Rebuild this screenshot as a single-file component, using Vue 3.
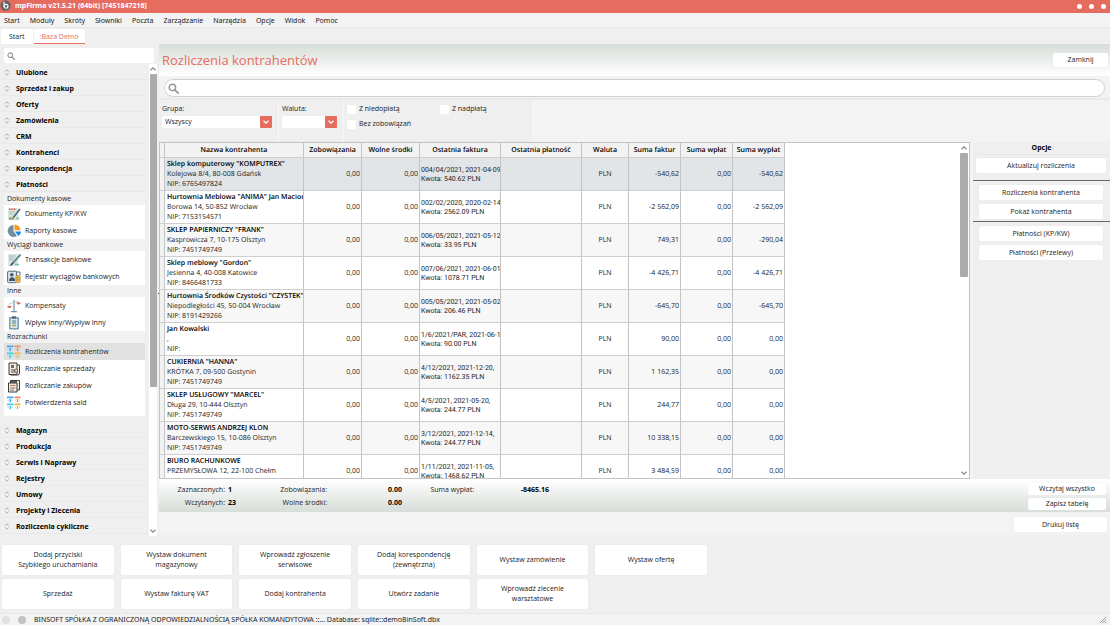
<template>
  <div class="app">
    <svg width="0" height="0" class="sprites" aria-hidden="true">
      <symbol id="search" viewBox="0 0 12 12">
        <circle cx="4.8" cy="4.8" r="3.5" fill="none" stroke="#999" stroke-width="1.6" />
        <path d="M7.4 7.4 L11 11" stroke="#999" stroke-width="2" stroke-linecap="round" />
      </symbol>
      <symbol id="chevron" viewBox="0 0 8 8">
        <path d="M1.5 2.8 L4 5.2 L6.5 2.8" fill="none" stroke="currentColor" stroke-width="1.2" />
      </symbol>
      <symbol id="updown" viewBox="0 0 6 8">
        <path d="M1 3 L3 1 L5 3 M1 5 L3 7 L5 5" fill="none" stroke="#999" stroke-width="0.9" />
      </symbol>
      <symbol id="cash" viewBox="0 0 14 14">
        <path d="M1 1 h10 v12 h-10z" fill="#d9e4df" />
        <path d="M2 2.3 h7" stroke="#e2574c" stroke-width="1.5" stroke-dasharray="1.5 .7" />
        <path d="M2.5 5 h5 M2.5 7 h3" stroke="#9aaeb2" stroke-width=".8" />
        <path d="M2 11.5 h5" stroke="#4fae8c" stroke-width="2" />
        <path d="M13 2 L5.5 11.5" stroke="#4a6b80" stroke-width="1.8" />
        <path d="M6.5 10 L4 13" stroke="#e9a93b" stroke-width="1.3" />
        <path d="M9 10 h3 v3 h-3z" fill="#a9cdd0" />
      </symbol>
      <symbol id="pie" viewBox="0 0 14 14">
        <path d="M6.5 7 V1 A6 6 0 1 0 10 12z" fill="#6f8da3" />
        <path d="M7.5 6.3 V.5 A6 6 0 0 1 13.5 6.3z" fill="#f79a1c" />
        <path d="M8 7.5 H14 A6 6 0 0 1 11.5 12z" fill="#1285ee" />
      </symbol>
      <symbol id="transfer" viewBox="0 0 14 14">
        <path d="M1 1 h10 v12 h-10z" fill="#dce8e7" />
        <path d="M2 3 h7 M2 5 h5 M2 7 h4" stroke="#91a9ad" stroke-width=".8" />
        <path d="M13.5 1.5 L5 11" stroke="#668c9e" stroke-width="2" />
        <path d="M5.8 10 L3.5 12.7" stroke="#273f4e" stroke-width="1.3" />
        <path d="M8 11.5 h4" stroke="#78b9ae" stroke-width="1.5" />
      </symbol>
      <symbol id="register" viewBox="0 0 14 14">
        <rect x=".6" y="1.2" width="9" height="11.5" rx="1" fill="#dce5ee" stroke="#5c6b7c" />
        <circle cx="4.8" cy="4.7" r="1.8" fill="#46566a" />
        <path d="M2 11 q0-3.7 3-3.7 t3 3.7z" fill="#40536b" />
        <path d="M9 2 h4 v3" fill="none" stroke="#5c6b7c" />
        <ellipse cx="11" cy="6.8" rx="2.5" ry="1.4" fill="#f2c54b" stroke="#94722b" stroke-width=".6" />
        <ellipse cx="11" cy="9" rx="2.5" ry="1.4" fill="#f2c54b" stroke="#94722b" stroke-width=".6" />
        <ellipse cx="11" cy="11.3" rx="2.5" ry="1.4" fill="#f2c54b" stroke="#94722b" stroke-width=".6" />
      </symbol>
      <symbol id="scales" viewBox="0 0 14 14">
        <path d="M7 1 V12 M4 12.6 H10" stroke="#7594a9" stroke-width="1.2" />
        <path d="M2.5 4.5 L11.5 2.3" stroke="#a9bfcc" stroke-width=".8" />
        <path d="M2.5 4.5 L1 7 M2.5 4.5 L4 7 M11.5 2.3 L10 4 M11.5 2.3 L13 4" stroke="#c3d3dc" stroke-width=".6" />
        <path d="M.3 7 h4.2 q0 2-2.1 2 t-2.1-2z M9.5 3.5 h4.2 q0 2-2.1 2 t-2.1-2z" fill="#dd6242" />
      </symbol>
      <symbol id="clipboard" viewBox="0 0 14 14">
        <rect x="2" y="1" width="10" height="12.6" rx="1" fill="#7f9dae" />
        <path d="M3.5 2.5 h7 v9.5 h-7z" fill="#d5e9ed" />
        <path d="M5 .3 h4 v2.4 h-4z" fill="#476779" />
        <path d="M5 5 h4 M5 7 h4" stroke="#527b8f" />
        <path d="M5 9.5 h4" stroke="#bf9d4c" stroke-width="1.5" />
      </symbol>
      <symbol id="ledger" viewBox="0 0 14 14">
        <path d="M0 .5 h6.5 v1.7 h-6.5z M2.5 3 h1.5 v3.3 h-1.5z" fill="#46a8f3" />
        <path d="M7.5 .5 h6 v1.7 h-6z M9.8 3 h1.5 v3.3 h-1.5z" fill="#ef8d60" />
        <path d="M0 7.5 h6.5 v1.7 h-6.5z M2.5 10 h1.5 v3.3 h-1.5z" fill="#3bd0ec" />
        <path d="M7.5 7.5 h6 v1.7 h-6z M9.8 10 h1.5 v3.3 h-1.5z" fill="#f2b745" />
        <path d="M.5 4.2 h1.3 M4.7 4.2 h1.3 M8 4.2 h1.2 M12 4.2 h1.2 M.5 11.3 h1.3 M4.7 11.3 h1.3 M8 11.3 h1.2 M12 11.3 h1.2" stroke="#b9c9d3" />
      </symbol>
      <symbol id="sales" viewBox="0 0 14 14">
        <path d="M2 1 h8 v11.5 h-8z" fill="#f2e8df" stroke="#3d3937" />
        <path d="M4 3 h3 v3 h-3z" fill="#6d6864" />
        <path d="M4 8 h4 M4 10 h4" stroke="#55504d" />
        <path d="M10 3 h2.5 v8 q0 2-2 2 h-7" fill="none" stroke="#3d3937" />
        <circle cx="9.2" cy="8.8" r="1.7" fill="#e8c3ad" stroke="#3d3937" stroke-width=".6" />
      </symbol>
      <symbol id="purchase" viewBox="0 0 14 14">
        <path d="M3.5 1.5 h9 v9.5 h-9z" fill="#f5ede5" stroke="#3d3937" />
        <path d="M1.5 4 h8.5 v9 h-8.5z" fill="#f5ede5" stroke="#3d3937" />
        <path d="M4 3 h6" stroke="#333" stroke-width="1.5" />
        <path d="M3 6.5 h5.5" stroke="#d07a54" stroke-width="1.2" />
        <path d="M3 9 h5.5 M3 11 h4" stroke="#66605c" stroke-width=".8" />
      </symbol>
    </svg>

    <header class="titlebar">
      <svg class="logo" viewBox="0 0 12 12">
        <circle cx="6" cy="6" r="5.6" fill="#666" />
        <circle cx="6.6" cy="6.9" r="2.1" fill="none" stroke="#fff" stroke-width="1.3" />
        <path d="M4.4 2 V7" stroke="#fff" stroke-width="1.3" />
      </svg>
      <strong>mpFirma v21.5.21 (64bit) [7451847216]</strong>
      <div class="window-buttons">
        <button v-for="b in windowButtons" :key="b" :aria-label="b"></button>
      </div>
    </header>

    <nav class="menubar">
      <a v-for="item in menu" :key="item" href="#">{{ item }}</a>
    </nav>

    <nav class="tabs">
      <button v-for="tab in tabs" :key="tab" :class="{ active: tab === activeTab }" @click="activeTab = tab">{{ tab }}</button>
    </nav>

    <div class="body">
      <aside class="sidebar">
        <label class="side-search">
          <svg><use href="#search" /></svg>
          <input v-model="sideQuery" type="text" aria-label="Szukaj w menu">
        </label>
        <div class="side-scroll">
          <div class="side-list">
            <button v-for="name in topSections" :key="name" class="section">
              <svg><use href="#updown" /></svg>{{ name }}
            </button>
            <div class="panel">
              <template v-for="group in groups" :key="group.name">
                <h3>{{ group.name }}</h3>
                <a
                  v-for="item in group.items"
                  :key="item.label"
                  href="#"
                  :class="{ selected: item.label === activeItem }"
                  @click.prevent="activeItem = item.label"
                >
                  <svg><use :href="'#' + item.icon" /></svg>{{ item.label }}
                </a>
              </template>
            </div>
            <button v-for="name in bottomSections" :key="name" class="section">
              <svg><use href="#updown" /></svg>{{ name }}
            </button>
          </div>
          <div class="scrollbar side-bar">
            <svg class="up"><use href="#chevron" /></svg>
            <div class="track"><div class="thumb"></div></div>
            <svg><use href="#chevron" /></svg>
          </div>
        </div>
      </aside>

      <div class="splitter"><i></i></div>

      <main class="content">
        <div class="page-head">
          <h1>Rozliczenia kontrahentów</h1>
          <button class="btn">Zamknij</button>
        </div>

        <div class="search-row">
          <label class="search">
            <svg><use href="#search" /></svg>
            <input v-model="query" type="text" aria-label="Szukaj kontrahenta">
          </label>
        </div>

        <div class="filters">
          <div class="filter group-filter">
            <label for="group">Grupa:</label>
            <div class="select">
              <select id="group"><option>Wszyscy</option></select>
              <span><svg><use href="#chevron" /></svg></span>
            </div>
          </div>
          <div class="filter currency-filter">
            <label for="currency">Waluta:</label>
            <div class="select">
              <select id="currency"><option></option></select>
              <span><svg><use href="#chevron" /></svg></span>
            </div>
          </div>
          <div class="filter checks">
            <label><input type="checkbox">Z niedopłatą</label>
            <label><input type="checkbox">Z nadpłatą</label>
            <label><input type="checkbox">Bez zobowiązań</label>
          </div>
        </div>

        <div class="work">
          <div class="table-box">
            <div class="table-view">
              <table>
                <colgroup>
                  <col class="c-mark"><col class="c-name"><col class="c-money"><col class="c-money">
                  <col class="c-doc"><col class="c-doc"><col class="c-cur">
                  <col class="c-sum"><col class="c-sum"><col class="c-sum">
                </colgroup>
                <thead>
                  <tr>
                    <th></th>
                    <th v-for="col in columns" :key="col">{{ col }}</th>
                  </tr>
                </thead>
                <tbody>
                  <tr v-for="(row, i) in rows" :key="row.name" :class="{ selected: i === selectedRow }" @click="selectedRow = i">
                    <td class="mark"></td>
                    <td class="name"><strong>{{ row.name }}</strong><br>{{ row.address }}<br>NIP: {{ row.nip }}</td>
                    <td class="num">0,00</td>
                    <td class="num">0,00</td>
                    <td class="doc">{{ row.invoice }}<br>Kwota: {{ row.amount }} PLN</td>
                    <td></td>
                    <td class="center">PLN</td>
                    <td class="num">{{ row.invoices }}</td>
                    <td class="num">0,00</td>
                    <td class="num">{{ row.payouts }}</td>
                  </tr>
                </tbody>
              </table>
            </div>
            <div class="scrollbar table-bar">
              <svg class="up"><use href="#chevron" /></svg>
              <div class="track"><div class="thumb"></div></div>
              <svg><use href="#chevron" /></svg>
            </div>
          </div>
          <section class="options">
            <h2>Opcje</h2>
            <div class="option-set wide"><button class="btn">Aktualizuj rozliczenia</button></div>
            <div class="option-set">
              <button class="btn">Rozliczenia kontrahenta</button>
              <button class="btn">Pokaż kontrahenta</button>
            </div>
            <div class="option-set">
              <button class="btn">Płatności (KP/KW)</button>
              <button class="btn">Płatności (Przelewy)</button>
            </div>
          </section>
        </div>

        <div class="summary">
          <div class="stats">
            <span>Zaznaczonych:</span><strong class="left">1</strong>
            <span>Zobowiązania:</span><strong>0.00</strong>
            <span>Suma wypłat:</span><strong>-8465.16</strong>
            <span>Wczytanych:</span><strong class="left">23</strong>
            <span>Wolne środki:</span><strong>0.00</strong>
          </div>
          <div class="summary-buttons">
            <button class="btn">Wczytaj wszystko</button>
            <button class="btn">Zapisz tabelę</button>
          </div>
        </div>
        <div class="print-row"><button class="btn">Drukuj listę</button></div>
      </main>
    </div>

    <div class="quick">
      <button v-for="label in quickButtons" :key="label" class="btn">{{ label }}</button>
    </div>

    <footer class="statusbar">
      <i class="dot"></i>
      <i class="dot dark"></i>
      <span>BINSOFT SPÓŁKA Z OGRANICZONĄ ODPOWIEDZIALNOŚCIĄ SPÓŁKA KOMANDYTOWA ::... Database: sqlite::demoBinSoft.dbx</span>
      <svg class="grip" viewBox="0 0 8 8">
        <path d="M1 7 L7 1 M3.5 7 L7 3.5 M6 7 L7 6" stroke="#999" />
      </svg>
    </footer>
  </div>
</template>

<script setup>
import { ref } from 'vue';

const windowButtons = ['Minimalizuj', 'Maksymalizuj', 'Zamknij okno'];
const menu = ['Start', 'Moduły', 'Skróty', 'Słowniki', 'Poczta', 'Zarządzanie', 'Narzędzia', 'Opcje', 'Widok', 'Pomoc'];
const tabs = ['Start', ':Baza Demo'];

const activeTab = ref(':Baza Demo');
const activeItem = ref('Rozliczenia kontrahentów');
const selectedRow = ref(0);
const sideQuery = ref('');
const query = ref('');

const topSections = ['Ulubione', 'Sprzedaż i zakup', 'Oferty', 'Zamówienia', 'CRM', 'Kontrahenci', 'Korespondencja', 'Płatności'];
const bottomSections = ['Magazyn', 'Produkcja', 'Serwis i Naprawy', 'Rejestry', 'Umowy', 'Projekty i Zlecenia', 'Rozliczenia cykliczne'];

const groups = [
  {
    name: 'Dokumenty kasowe',
    items: [
      { icon: 'cash', label: 'Dokumenty KP/KW' },
      { icon: 'pie', label: 'Raporty kasowe' }
    ]
  },
  {
    name: 'Wyciągi bankowe',
    items: [
      { icon: 'transfer', label: 'Transakcje bankowe' },
      { icon: 'register', label: 'Rejestr wyciągów bankowych' }
    ]
  },
  {
    name: 'Inne',
    items: [
      { icon: 'scales', label: 'Kompensaty' },
      { icon: 'clipboard', label: 'Wpływ Inny/Wypływ Inny' }
    ]
  },
  {
    name: 'Rozrachunki',
    items: [
      { icon: 'ledger', label: 'Rozliczenia kontrahentów' },
      { icon: 'sales', label: 'Rozliczanie sprzedaży' },
      { icon: 'purchase', label: 'Rozliczanie zakupów' },
      { icon: 'ledger', label: 'Potwierdzenia sald' }
    ]
  }
];

const columns = ['Nazwa kontrahenta', 'Zobowiązania', 'Wolne środki', 'Ostatnia faktura', 'Ostatnia płatność', 'Waluta', 'Suma faktur', 'Suma wpłat', 'Suma wypłat'];

const rows = [
  { name: 'Sklep komputerowy "KOMPUTREX"', address: 'Kolejowa 8/4, 80-008 Gdańsk', nip: '6765497824', invoice: '004/04/2021, 2021-04-09,', amount: '540.62', invoices: '-540,62', payouts: '-540,62' },
  { name: 'Hurtownia Meblowa "ANIMA" Jan Macioc', address: 'Borowa 14, 50-852 Wrocław', nip: '7153154571', invoice: '002/02/2020, 2020-02-14,', amount: '2562.09', invoices: '-2 562,09', payouts: '-2 562,09' },
  { name: 'SKLEP PAPIERNICZY "FRANK"', address: 'Kasprowicza 7, 10-175 Olsztyn', nip: '7451749749', invoice: '006/05/2021, 2021-05-12,', amount: '33.95', invoices: '749,31', payouts: '-290,04' },
  { name: 'Sklep meblowy "Gordon"', address: 'Jesienna 4, 40-008 Katowice', nip: '8466481733', invoice: '007/06/2021, 2021-06-01,', amount: '1078.71', invoices: '-4 426,71', payouts: '-4 426,71' },
  { name: 'Hurtownia Środków Czystości "CZYSTEK"', address: 'Niepodległości 45, 50-004 Wrocław', nip: '8191429266', invoice: '005/05/2021, 2021-05-02,', amount: '206.46', invoices: '-645,70', payouts: '-645,70' },
  { name: 'Jan Kowalski', address: ',', nip: '', invoice: '1/6/2021/PAR, 2021-06-17', amount: '90.00', invoices: '90,00', payouts: '0,00' },
  { name: 'CUKIERNIA "HANNA"', address: 'KRÓTKA 7, 09-500 Gostynin', nip: '7451749749', invoice: '4/12/2021, 2021-12-20,', amount: '1162.35', invoices: '1 162,35', payouts: '0,00' },
  { name: 'SKLEP USŁUGOWY "MARCEL"', address: 'Długa 29, 10-444 Olsztyn', nip: '7451749749', invoice: '4/5/2021, 2021-05-20,', amount: '244.77', invoices: '244,77', payouts: '0,00' },
  { name: 'MOTO-SERWIS ANDRZEJ KLON', address: 'Barczewskiego 15, 10-086 Olsztyn', nip: '7451749749', invoice: '3/12/2021, 2021-12-14,', amount: '244.77', invoices: '10 338,15', payouts: '0,00' },
  { name: 'BIURO RACHUNKOWE', address: 'PRZEMYSŁOWA 12, 22-100 Chełm', nip: '7451749749', invoice: '1/11/2021, 2021-11-05,', amount: '1468.62', invoices: '3 484,59', payouts: '0,00' }
];

const quickButtons = [
  'Dodaj przyciski\nSzybkiego uruchamiania',
  'Wystaw dokument\nmagazynowy',
  'Wprowadź zgłoszenie\nserwisowe',
  'Dodaj korespondencję\n(zewnętrzna)',
  'Wystaw zamówienie',
  'Wystaw ofertę',
  'Sprzedaż',
  'Wystaw fakturę VAT',
  'Dodaj kontrahenta',
  'Utwórz zadanie',
  'Wprowadź zlecenie\nwarsztatowe'
];
</script>

<style>
body {
  margin: 0;
}
</style>

<style scoped>
.app {
  display: flex;
  flex-direction: column;
  height: 100vh;
  overflow: hidden;
  background: #efefef;
  color: #222;
  font-family: "Open Sans", "Noto Sans", sans-serif;
  font-size: 7px;
  line-height: 10px;
}

.app * {
  box-sizing: border-box;
}

.sprites {
  position: absolute;
}

button,
input,
select {
  font: inherit;
  color: inherit;
  border: none;
  margin: 0;
  padding: 0;
  background: none;
  outline: none;
}

a {
  color: inherit;
  text-decoration: none;
}

h1,
h2,
h3 {
  margin: 0;
  font-weight: normal;
}

svg {
  display: block;
  flex: none;
}

.btn {
  background: #fff;
  border-radius: 2px;
  box-shadow: 0 0 1px #ddd;
  white-space: pre-line;
  text-align: center;
}

.titlebar,
.menubar,
.statusbar {
  font-family: "Noto Sans", "Open Sans", sans-serif;
}

.titlebar {
  display: flex;
  align-items: center;
  flex: none;
  height: 13px;
  padding: 0 4px 1px 0;
  background: #e66c60;
  color: #fff;
}

.logo {
  width: 11px;
  height: 11px;
  margin: 0 4px 2px 0;
}

.window-buttons {
  display: flex;
  gap: 7px;
  margin-left: auto;
}

.window-buttons button {
  width: 5px;
  height: 5px;
  border-radius: 50%;
  background: #fff;
}

.menubar {
  display: flex;
  align-items: center;
  flex: none;
  gap: 10px;
  height: 15px;
  padding: 2px 0 0 4px;
  background: #f3f3f3;
  border-bottom: 1px solid #e8e8e8;
}

.tabs {
  display: flex;
  flex: none;
  gap: 1px;
  height: 16px;
  padding: 1px 1px 0;
}

.tabs button {
  padding: 1px 8px 0;
  background: #fff;
  border-radius: 2px 2px 0 0;
}

.tabs button.active {
  padding: 2px 6px 0;
  color: #e66c60;
  border-bottom: 1px solid #e66c60;
}

.body {
  display: flex;
  flex: 1;
  min-height: 0;
}

.sidebar {
  display: flex;
  flex-direction: column;
  flex: none;
  width: 157px;
  padding-top: 4px;
}

.side-search {
  display: flex;
  align-items: center;
  flex: none;
  height: 15px;
  margin: 0 3px 1px 4px;
  padding-left: 3px;
  background: #fff;
  border-radius: 2px;
}

.side-search svg {
  width: 8px;
  height: 8px;
}

.side-search input,
.search input {
  flex: 1;
  min-width: 0;
  padding-left: 5px;
}

.side-scroll {
  display: flex;
  flex: 1;
  min-height: 0;
}

.side-list {
  flex: 1;
  overflow: hidden;
}

.section {
  display: flex;
  align-items: center;
  width: 100%;
  height: 16px;
  padding: 2px 0 0 4px;
  border-bottom: 1px solid #e9e9e9;
  color: #000;
  font-weight: bold;
}

.section svg {
  width: 6px;
  height: 7px;
  margin-right: 6px;
}

.panel {
  margin: 1px 4px 6px;
  padding-bottom: 5px;
  background: #fff;
}

.panel h3 {
  padding: 1px 3px;
  background: #f2f2f2;
  font-size: 7px;
  line-height: 10px;
}

.panel a {
  display: flex;
  align-items: center;
  gap: 4px;
  height: 17px;
  padding-left: 3px;
}

.panel a.selected {
  background: #e1e1e1;
}

.panel svg {
  width: 14px;
  height: 14px;
}

.scrollbar {
  display: flex;
  flex-direction: column;
  align-items: center;
  flex: none;
  padding: 1px 0;
  background: #fff;
  color: #888;
}

.scrollbar svg {
  width: 8px;
  height: 8px;
}

.scrollbar .up {
  transform: rotate(180deg);
}

.track {
  flex: 1;
  width: 100%;
}

.thumb {
  width: 7px;
  margin: 1px auto;
  border-radius: 1px;
  background: #ababab;
}

.side-bar {
  width: 8px;
  margin-bottom: 6px;
}

.side-bar .thumb {
  height: 69%;
}

.splitter {
  display: flex;
  align-items: center;
  justify-content: flex-end;
  width: 2px;
}

.splitter i {
  width: 1px;
  height: 1px;
  background: #444;
}

.content {
  display: flex;
  flex-direction: column;
  flex: 1;
  min-width: 0;
  background: #f3f3f3;
  margin-bottom: 7px;
}

.page-head {
  display: flex;
  align-items: center;
  justify-content: space-between;
  flex: none;
  height: 32px;
  padding: 0 2px 0 3px;
  background: linear-gradient(#d7ddd8, #fff);
}

h1 {
  color: #e66c60;
  font-size: 13px;
  line-height: 18px;
}

.page-head .btn {
  width: 55px;
  height: 14px;
}

.search-row {
  flex: none;
  padding: 3px 5px 1px;
  border-bottom: 2px solid #e9e9e9;
}

.search {
  display: flex;
  align-items: center;
  height: 18px;
  padding-left: 3px;
  background: #fff;
  border: 1px solid #d0d0d0;
  border-radius: 9px;
}

.search svg {
  width: 11px;
  height: 11px;
}

.filters {
  display: flex;
  flex: none;
  gap: 2px;
  height: 42px;
}

.filter {
  padding: 4px 3px;
  background: #efefef;
  border: 1px solid #ebebeb;
  border-width: 0 1px 1px 0;
}

.group-filter {
  width: 118px;
}

.currency-filter {
  width: 63px;
}

.select {
  display: flex;
  margin-top: 2px;
  width: 110px;
  height: 12px;
}

.currency-filter .select {
  width: 55px;
}

.select select {
  flex: 1;
  min-width: 0;
  padding-left: 3px;
  appearance: none;
  background: #fff;
  border-radius: 2px 0 0 2px;
}

.select span {
  display: flex;
  align-items: center;
  justify-content: center;
  width: 12px;
  background: #e66c60;
  color: #fff;
  border-radius: 1px;
}

.select svg {
  width: 8px;
  height: 8px;
}

.checks {
  display: grid;
  grid-template-columns: 93px 90px;
  grid-auto-rows: 10px;
  row-gap: 5px;
  width: 187px;
}

.checks label {
  display: flex;
  align-items: center;
  gap: 3px;
}

.checks input {
  width: 9px;
  height: 9px;
  appearance: none;
  background: #fff;
  border-radius: 1px;
}

.checks input:checked {
  background: #e66c60;
}

.work {
  display: flex;
  flex: 1;
  gap: 3px;
  min-height: 0;
}

.table-box {
  display: flex;
  flex: 1;
  min-width: 0;
  background: #fff;
  border: 1px solid #c4c4c4;
}

.table-view {
  flex: 1;
  min-width: 0;
  overflow: hidden;
}

table {
  width: 625px;
  table-layout: fixed;
  border-collapse: separate;
  border-spacing: 0;
  text-rendering: geometricPrecision;
}

.c-mark { width: 5px; }
.c-name { width: 139px; }
.c-money { width: 58px; }
.c-doc { width: 81px; }
.c-cur { width: 47px; }
.c-sum { width: 52px; }

th,
td {
  overflow: hidden;
  padding: 2px 1px 0;
  border-right: 1px solid #c4c4c4;
  border-bottom: 1px solid #cfcfcf;
  white-space: nowrap;
}

th {
  height: 15px;
  background: #f2f2f2;
  color: #000;
  font-weight: 600;
}

td {
  height: 33px;
  padding-top: 1px;
  text-align: left;
}

tbody tr:nth-child(odd) {
  background: #f7f7f7;
}

tbody tr.selected {
  background: #e1e5e8;
}

td.mark {
  background: #f2f2f2;
}

td.name {
  padding: 2px 0 0 2px;
}

td.doc {
  padding-right: 0;
  font-family: Roboto, "Open Sans", sans-serif;
  line-height: 9px;
}

td.num {
  text-align: right;
}

td.center {
  text-align: center;
}

td strong {
  color: #000;
  font-weight: 600;
}

.table-bar {
  width: 11px;
}

.table-bar .thumb {
  width: 8px;
  height: 39%;
}

.options {
  flex: none;
  width: 137px;
  background: #efefef;
}

.options h2 {
  padding: 1px 0;
  border-bottom: 1px solid #e9e9e9;
  color: #000;
  font-size: 7px;
  font-weight: bold;
  line-height: 10px;
  text-align: center;
}

.option-set {
  display: flex;
  flex-direction: column;
  gap: 4px;
  padding: 4px 7px 2px 6px;
}

.option-set.wide {
  padding: 3px 4px 7px 3px;
}

.option-set + .option-set {
  border-top: 1px solid #666;
}

.option-set .btn {
  height: 15px;
}

.summary {
  display: flex;
  justify-content: space-between;
  flex: none;
  height: 33px;
  padding: 4px 4px 0 0;
  background: linear-gradient(#fff, #d7ddd8);
}

.stats {
  display: grid;
  grid-template-columns: 66px 20px 76px 72px 69px 72px;
  grid-auto-rows: 13px;
  column-gap: 3px;
  text-align: right;
  line-height: 13px;
}

.stats strong {
  color: #000;
}

.stats .left {
  text-align: left;
}

.summary-buttons {
  display: flex;
  flex-direction: column;
  gap: 3px;
  width: 78px;
}

.summary-buttons .btn {
  height: 12px;
}

.print-row {
  display: flex;
  justify-content: flex-end;
  flex: none;
  height: 23px;
  padding: 5px 3px 0;
}

.print-row .btn {
  width: 93px;
  height: 15px;
}

.quick {
  display: grid;
  grid-template-columns: repeat(6, 1fr);
  grid-auto-rows: 30px;
  flex: none;
  gap: 4px 7px;
  max-width: 705px;
  margin: 3px 0 4px 2px;
}

.statusbar {
  display: flex;
  align-items: center;
  flex: none;
  height: 12px;
  padding: 0 3px 0 2px;
  background: #f3f3f3;
  border-top: 1px solid #e8e8e8;
}

.dot {
  width: 8px;
  height: 8px;
  margin-right: 8px;
  border-radius: 50%;
  background: #e2e2e2;
}

.dot.dark {
  background: #c2c2c2;
}

.grip {
  width: 8px;
  height: 8px;
  margin-left: auto;
}
</style>
